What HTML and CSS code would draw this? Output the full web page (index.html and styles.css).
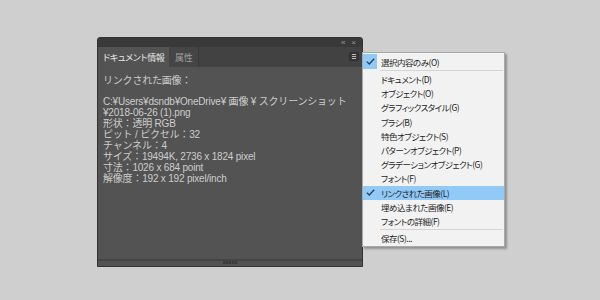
FILE: index.html
```html
<!DOCTYPE html>
<html>
<head>
    <title>ドキュメント情報</title>
    <link rel="stylesheet" href="styles.css">
</head>
<body>
    <div class="panel">
        <div class="panel-top">
            <span class="top-icon">&laquo;</span>
            <span class="top-icon">&times;</span>
        </div>
        <div class="tabs">
            <div class="tab active">ドキュメント情報</div>
            <div class="tab">属性</div>
            <div class="menu-button">
                <span></span><span></span><span></span>
            </div>
        </div>
        <div class="info">
            <p>リンクされた画像：</p>
            <p class="gap"></p>
            <p>C:¥Users¥dsndb¥OneDrive¥ 画像 ¥ スクリーンショット</p>
            <p>¥2018-06-26 (1).png</p>
            <p>形状：透明 RGB</p>
            <p>ピット / ピクセル：32</p>
            <p>チャンネル：4</p>
            <p>サイズ：19494K, 2736 x 1824 pixel</p>
            <p>寸法：1026 x 684 point</p>
            <p>解像度：192 x 192 pixel/inch</p>
        </div>
        <div class="panel-foot">
            <div class="grip"></div>
        </div>
    </div>

    <div class="menu">
        <div class="item first checked">
            <span class="check"><svg width="9" height="7" viewBox="0 0 9 7"><polyline points="0.8,3.6 3.3,6 8.2,0.8" fill="none" stroke="#26405c" stroke-width="1.3"/></svg></span>選択内容のみ(O)
        </div>
        <div class="sep"></div>
        <div class="item"><span class="check"></span>ドキュメント(D)</div>
        <div class="item"><span class="check"></span>オブジェクト(O)</div>
        <div class="item"><span class="check"></span>グラフィックスタイル(G)</div>
        <div class="item"><span class="check"></span>ブラシ(B)</div>
        <div class="item"><span class="check"></span>特色オブジェクト(S)</div>
        <div class="item"><span class="check"></span>パターンオブジェクト(P)</div>
        <div class="item"><span class="check"></span>グラデーションオブジェクト(G)</div>
        <div class="item"><span class="check"></span>フォント(F)</div>
        <div class="item checked hover">
            <span class="check"><svg width="9" height="7" viewBox="0 0 9 7"><polyline points="0.8,3.6 3.3,6 8.2,0.8" fill="none" stroke="#26405c" stroke-width="1.3"/></svg></span>リンクされた画像(L)
        </div>
        <div class="item"><span class="check"></span>埋め込まれた画像(E)</div>
        <div class="item"><span class="check"></span>フォントの詳細(F)</div>
        <div class="sep"></div>
        <div class="item"><span class="check"></span>保存(S)...</div>
    </div>
</body>
</html>
```

FILE: styles.css
```css
body {
    margin: 0;
    padding: 37px 0 0 97px;
    background-color: #cfcfcf;
    font-family: "Liberation Sans", "Noto Sans CJK JP", sans-serif;
}

.panel {
    width: 266px;
    height: 230px;
    display: flex;
    flex-direction: column;
    background-color: #535353;
    border: 1px solid #333;
    border-radius: 3px 3px 0 0;
    box-sizing: border-box;
}

.panel-top {
    height: 9px;
    display: flex;
    justify-content: flex-end;
    align-items: center;
    gap: 6px;
    padding-right: 6px;
    background-color: #393939;
    border-radius: 3px 3px 0 0;
}

.top-icon {
    color: #9a9a9a;
    font-size: 8px;
    line-height: 8px;
}

.tabs {
    height: 20px;
    display: flex;
    align-items: stretch;
    background-color: #424242;
}

.tab {
    display: flex;
    align-items: center;
    padding: 0 6px;
    font-size: 9px;
    letter-spacing: -0.3px;
    white-space: nowrap;
    color: #9e9e9e;
    background-color: #454545;
    border-right: 1px solid #3a3a3a;
    font-feature-settings: "palt";
}

.tab.active {
    width: 71px;
    box-sizing: border-box;
    padding-left: 5px;
    color: #e6e6e6;
    background-color: #535353;
    border-right: none;
}

.menu-button {
    margin: 5px 3px 0 auto;
    width: 10px;
    height: 9px;
    box-sizing: border-box;
    display: flex;
    flex-direction: column;
    justify-content: center;
    gap: 1px;
    padding: 0 2px;
    background-color: #3a3a3a;
    border: 1px solid #2c2c2c;
    border-radius: 2px;
}

.menu-button span {
    height: 1px;
    background-color: #b5b5b5;
}

.info {
    flex: 1;
    padding: 8px 5px;
    font-size: 10px;
    line-height: 11px;
    letter-spacing: -0.2px;
    color: #cdcdcd;
}

.info p {
    margin: 0;
    white-space: nowrap;
}

.info .gap {
    height: 10px;
}

.panel-foot {
    height: 7px;
    display: flex;
    justify-content: center;
    border-top: 2px solid #444;
    box-sizing: border-box;
}

.grip {
    width: 15px;
    height: 3px;
    background-image: repeating-linear-gradient(to right, #3a3a3a 0, #3a3a3a 2px, #4a4a4a 2px, #4a4a4a 3px);
}

.menu {
    position: absolute;
    left: 362px;
    top: 52px;
    width: 143px;
    padding: 1px 0 1px;
    background-color: #f2f2f2;
    border: 1px solid #a8a8a8;
    box-sizing: border-box;
    box-shadow: 2px 2px 2px rgba(0, 0, 0, 0.3);
    font-family: "Noto Sans CJK JP", sans-serif;
    font-feature-settings: "palt";
    font-size: 8.5px;
    letter-spacing: -0.5px;
    color: #1e1e1e;
}

.item {
    height: 14.2px;
    display: flex;
    align-items: center;
    white-space: nowrap;
}

.item.first {
    height: 15px;
}

.check {
    width: 14px;
    height: 100%;
    margin-right: 4px;
    display: flex;
    align-items: center;
    justify-content: center;
}

.item.checked .check {
    background-color: #91c9f7;
}

.item.hover {
    background-color: #91c9f7;
}

.sep {
    height: 1px;
    margin: 1px 1px 1px 17px;
    background-color: #d5d5d5;
}
```
